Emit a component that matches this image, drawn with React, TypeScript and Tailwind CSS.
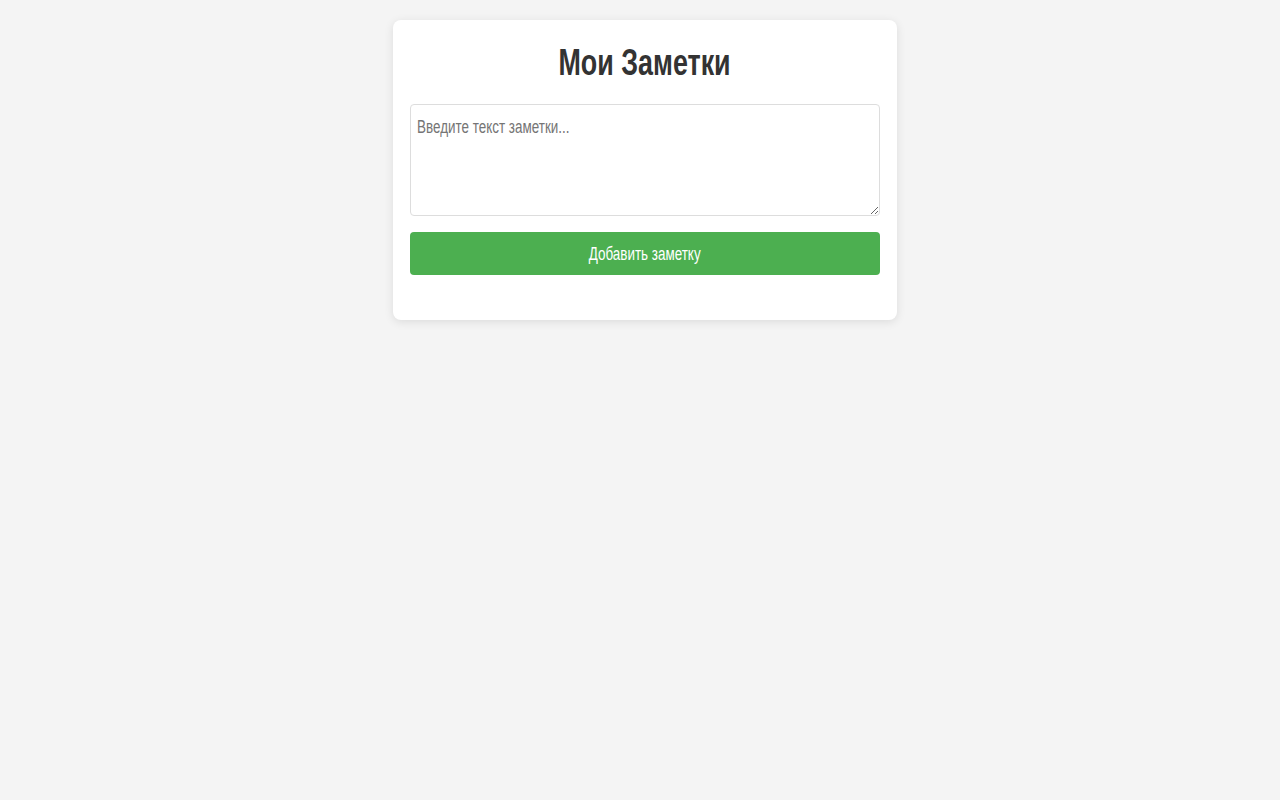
import React from "react";

export default function App() {
  return (
    <div className="min-h-screen w-full bg-[#f4f4f4] pt-5 pl-[10px] font-['Liberation_Sans',Arial,sans-serif]">
      <div className="mx-auto flex w-[504px] flex-col rounded-lg bg-white px-[17px] pt-[26px] pb-[45px] shadow-[0_2px_10px_rgba(0,0,0,0.1)]">
        <h1 className="flex h-[32px] items-center justify-center text-[32px] font-bold leading-[32px] text-[#333]">
          <span className="inline-block scale-x-[0.84] scale-y-[1.16] whitespace-nowrap">Мои Заметки</span>
        </h1>
        <div className="relative mt-[26px] h-[112px] w-full">
          <textarea
            aria-label="Введите текст заметки..."
            className="block h-full w-full resize-y rounded border border-[#ddd] bg-white outline-none"
          />
          <span className="pointer-events-none absolute left-[7px] top-[15px] inline-block origin-left scale-x-[0.84] scale-y-[1.15] whitespace-nowrap text-base leading-4 text-[#757575]">
            Введите текст заметки...
          </span>
        </div>
        <button className="mt-4 flex h-[43px] w-full items-center justify-center rounded bg-[#4caf50] text-base leading-4 text-white">
          <span className="inline-block scale-x-[0.84] scale-y-[1.15] whitespace-nowrap">Добавить заметку</span>
        </button>
      </div>
    </div>
  );
}
